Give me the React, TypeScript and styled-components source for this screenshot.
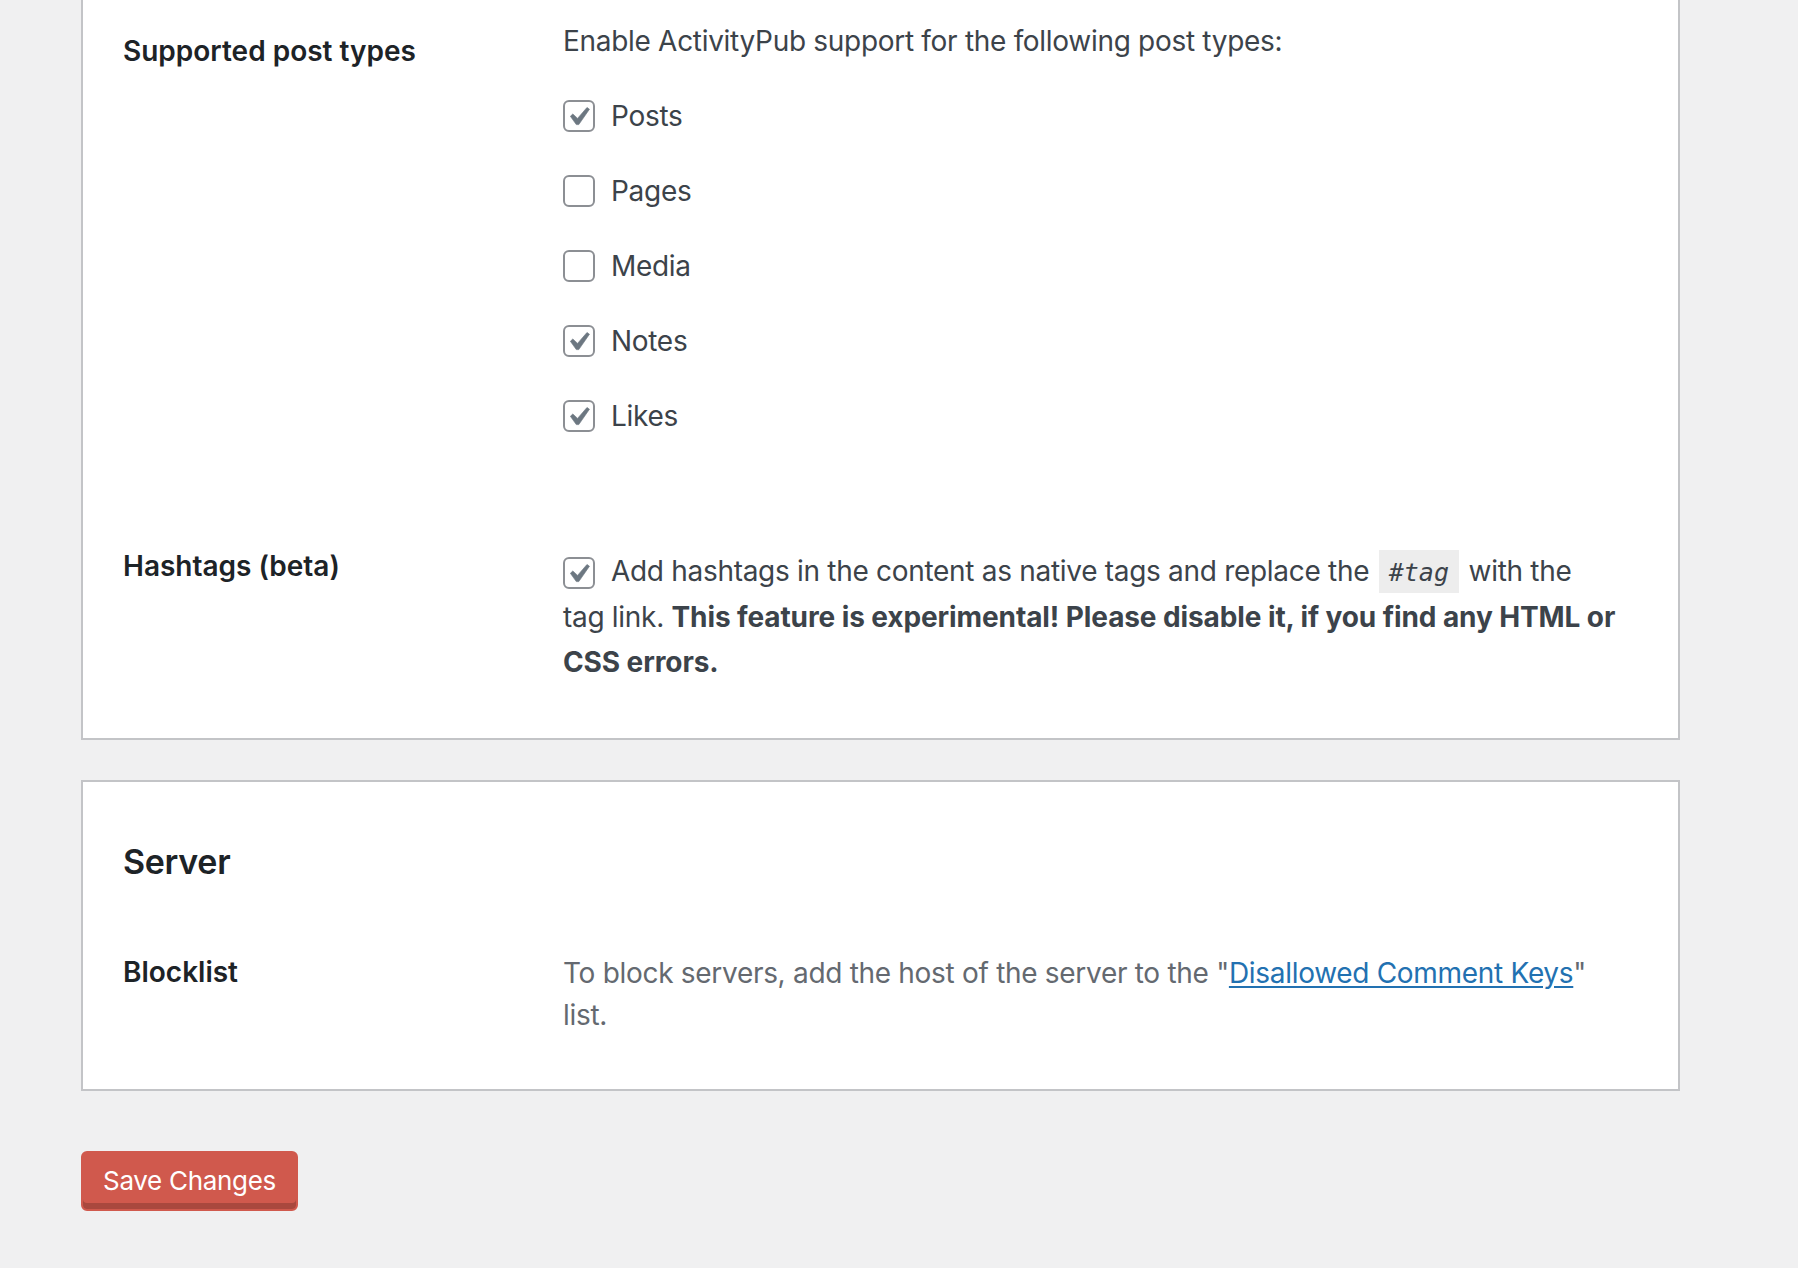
import styled, { createGlobalStyle } from "styled-components";

const GlobalStyle = createGlobalStyle`
  html, body {
    margin: 0;
    padding: 0;
    background: #f0f0f1;
  }
  body {
    font-family: Inter, "Noto Sans", "Liberation Sans", sans-serif;
    color: #3c434a;
    letter-spacing: -0.3px;
    -webkit-font-smoothing: antialiased;
  }
`;

const Page = styled.div`
  padding: 0 118px 60px 81px;
  min-height: 1268px;
  box-sizing: border-box;
`;

const Card = styled.section<{ $cut?: boolean }>`
  background: #fff;
  border: 2px solid #c3c4c7;
  border-top: ${(p) => (p.$cut ? "none" : "2px solid #c3c4c7")};
  margin-top: ${(p) => (p.$cut ? "-7px" : "40px")};
  padding: 0 40px 23px;
`;

const Heading = styled.h2`
  margin: 58px 0 30px;
  font-size: 34px;
  line-height: 44px;
  font-weight: 600;
  color: #1d2327;
`;

const Row = styled.div`
  display: flex;
`;

const Label = styled.div`
  width: 400px;
  flex: none;
  padding: 40px 20px 40px 0;
  font-size: 28px;
  line-height: 36px;
  font-weight: 600;
  letter-spacing: 0;
  color: #1d2327;
`;

const Field = styled.div<{ $top?: number }>`
  flex: 1;
  padding: ${(p) => p.$top ?? 30}px 20px 30px;
  font-size: 28px;
  line-height: 36px;
`;

const Intro = styled.p`
  margin: 0 0 39px;
`;

const OptionList = styled.div`
  display: flex;
  flex-direction: column;
  gap: 39px;
  margin-bottom: 44px;
`;

const Option = styled.label`
  display: flex;
  align-items: center;
  gap: 16px;
  height: 36px;
`;

const Box = styled.span<{ $inline?: boolean }>`
  display: inline-flex;
  width: 32px;
  height: 32px;
  box-sizing: border-box;
  border: 2px solid #8c8f94;
  border-radius: 6px;
  background: #fff;
  flex: none;
  vertical-align: ${(p) => (p.$inline ? "-6px" : "middle")};
  margin-right: ${(p) => (p.$inline ? "16px" : "0")};
  svg {
    width: 100%;
    height: 100%;
  }
`;

const Paragraph = styled.p`
  margin: 0;
  line-height: 45px;
  strong {
    font-weight: 700;
    letter-spacing: -0.1px;
  }
`;

const Code = styled.code`
  font-family: "DejaVu Sans Mono", "Liberation Mono", monospace;
  font-style: italic;
  font-size: 25px;
  letter-spacing: 0;
  padding: 8px 10px 6px;
  margin: 0 2px;
  background: rgba(0, 0, 0, 0.07);
  color: #3c434a;
`;

const Description = styled.p`
  margin: 0;
  line-height: 42px;
  color: #646970;
  a {
    color: #2271b1;
    text-decoration: underline;
    text-underline-offset: 3px;
  }
`;

const Submit = styled.div`
  margin-top: 60px;
`;

const Button = styled.button`
  height: 60px;
  padding: 0 20px 2px;
  font-family: inherit;
  font-size: 26px;
  letter-spacing: -0.3px;
  color: #fff;
  background: #d0594d;
  border: 2px solid #d0594d;
  border-radius: 6px;
  box-shadow: inset 0 -6px 0 #a9483e;
  cursor: pointer;
`;

function Checkbox({ checked, inline }: { checked: boolean; inline?: boolean }) {
  return (
    <Box $inline={inline}>
      {checked && (
        <svg viewBox="2.86 1.9 15.24 15.24">
          <path
            d="M14.83 4.89l1.34.94-5.81 8.38H9.02L5.78 9.67l1.34-1.25 2.57 2.4z"
            fill="#6c7781"
            stroke="#6c7781"
            strokeWidth="0.35"
            strokeLinejoin="round"
          />
        </svg>
      )}
    </Box>
  );
}

const postTypes = [
  { name: "Posts", checked: true },
  { name: "Pages", checked: false },
  { name: "Media", checked: false },
  { name: "Notes", checked: true },
  { name: "Likes", checked: true },
];

export default function App() {
  return (
    <Page>
      <GlobalStyle />
      <Card $cut>
        <Row>
          <Label>Supported post types</Label>
          <Field>
            <Intro>Enable ActivityPub support for the following post types:</Intro>
            <OptionList>
              {postTypes.map((t) => (
                <Option key={t.name}>
                  <Checkbox checked={t.checked} />
                  {t.name}
                </Option>
              ))}
            </OptionList>
          </Field>
        </Row>
        <Row>
          <Label>Hashtags (beta)</Label>
          <Field $top={41}>
            <Paragraph>
              <Checkbox checked inline />
              Add hashtags in the content as native tags and replace the <Code>#tag</Code> with the
              tag link. <strong>This feature is experimental! Please disable it, if you find any HTML or CSS errors.</strong>
            </Paragraph>
          </Field>
        </Row>
      </Card>
      <Card>
        <Heading>Server</Heading>
        <Row>
          <Label>Blocklist</Label>
          <Field $top={38}>
            <Description>
              To block servers, add the host of the server to the "<a href="#">Disallowed Comment Keys</a>" list.
            </Description>
          </Field>
        </Row>
      </Card>
      <Submit>
        <Button>Save Changes</Button>
      </Submit>
    </Page>
  );
}
